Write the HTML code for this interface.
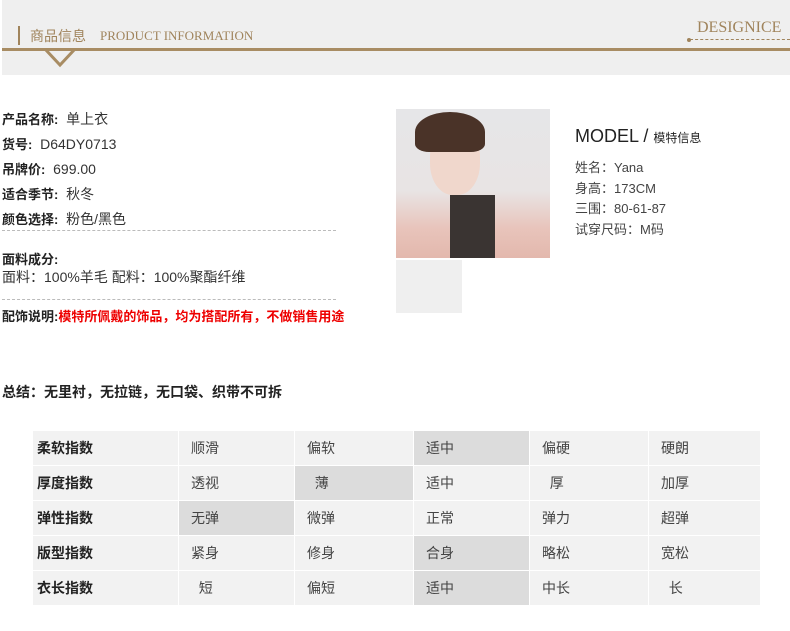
<!DOCTYPE html>
<html><head><meta charset="utf-8"><style>
*{margin:0;padding:0;box-sizing:border-box}
body{width:790px;height:631px;background:#fff;position:relative;overflow:hidden;font-family:"Liberation Sans","Noto Sans CJK SC",sans-serif;color:#333}
.a{position:absolute;white-space:nowrap}
.hd{position:absolute;left:2px;top:0;width:788px;height:75px;background:#efefef}
.gold{color:#a0845c;font-family:"Liberation Serif","Noto Serif CJK SC",serif}
.lbl{font-weight:bold;color:#222;font-size:13px}
.f{font-size:14px}
.dash{position:absolute;left:2px;width:334px;border-top:1px dashed #bbb}
table{position:absolute;left:32px;top:430px;border-collapse:collapse;width:729px}
td{height:35px;background:#f2f2f2;border:1px solid #fff;font-size:14px;color:#444;padding-left:12px}
td.h{font-weight:bold;color:#222;padding-left:4px}
td.s{background:#dcdcdc}
</style></head><body>
<div class="hd"></div>
<div class="a" style="left:18px;top:26px;width:2px;height:19px;background:#a0845c"></div>
<div class="a gold" style="left:30px;top:26px;font-size:14px;font-family:'Noto Sans CJK SC',sans-serif">商品信息</div>
<div class="a gold" style="left:100px;top:28px;font-size:13px">PRODUCT INFORMATION</div>
<div class="a gold" style="left:697px;top:19px;font-size:16px">DESIGNICE</div>
<div class="a" style="left:690px;top:39px;width:100px;border-top:1px dashed #a0845c"></div>
<div class="a" style="left:687px;top:38px;width:4px;height:4px;border-radius:2px;background:#a0845c"></div>
<div class="a" style="left:2px;top:48px;width:788px;height:3px;background:#a88c63"></div>
<svg class="a" style="left:44px;top:47px" width="34" height="22"><path d="M1 2 L16 18 L31 2" fill="none" stroke="#a88c63" stroke-width="3"/></svg>

<div class="a f" style="left:2px;top:109px"><span class="lbl">产品名称:</span> &nbsp;单上衣</div>
<div class="a f" style="left:2px;top:134px"><span class="lbl">货号:</span> &nbsp;D64DY0713</div>
<div class="a f" style="left:2px;top:159px"><span class="lbl">吊牌价:</span> &nbsp;699.00</div>
<div class="a f" style="left:2px;top:184px"><span class="lbl">适合季节:</span> &nbsp;秋冬</div>
<div class="a f" style="left:2px;top:209px"><span class="lbl">颜色选择:</span> &nbsp;粉色/黑色</div>
<div class="dash" style="top:230px"></div>
<div class="a lbl" style="left:2px;top:249px">面料成分:</div>
<div class="a f" style="left:2px;top:267px">面料：100%羊毛 配料：100%聚酯纤维</div>
<div class="dash" style="top:299px"></div>
<div class="a" style="left:2px;top:306px;font-size:13px"><span class="lbl">配饰说明:</span><span style="color:#e00;font-weight:bold">模特所佩戴的饰品，均为搭配所有，不做销售用途</span></div>

<div class="a" style="left:396px;top:109px;width:154px;height:149px;background:linear-gradient(180deg,#e6e6e8 0%,#e8e4e4 55%,#e8c4bb 80%,#e3b8ad 100%)"></div>
<div class="a" style="left:430px;top:125px;width:50px;height:70px;border-radius:45%;background:#f0d7cc"></div>
<div class="a" style="left:415px;top:112px;width:70px;height:40px;border-radius:50% 50% 20% 20%;background:#4a3328"></div>
<div class="a" style="left:450px;top:195px;width:45px;height:63px;background:#3a3432"></div>
<div class="a" style="left:396px;top:260px;width:66px;height:53px;background:#efefef"></div>

<div class="a" style="left:575px;top:126px;font-size:18px;color:#222">MODEL / <span style="font-size:12px">模特信息</span></div>
<div class="a" style="left:575px;top:158px;font-size:13px;color:#444;line-height:20.5px">姓名：Yana<br>身高：173CM<br>三围：80-61-87<br>试穿尺码：M码</div>

<div class="a" style="left:2px;top:382px;font-size:14px;font-weight:bold;color:#222">总结：无里衬，无拉链，无口袋、织带不可拆</div>

<table>
<tr><td class="h" style="width:146px">柔软指数</td><td style="width:116px">顺滑</td><td style="width:119px">偏软</td><td class="s" style="width:116px">适中</td><td style="width:119px">偏硬</td><td>硬朗</td></tr>
<tr><td class="h">厚度指数</td><td>透视</td><td class="s">&nbsp;&nbsp;薄</td><td>适中</td><td>&nbsp;&nbsp;厚</td><td>加厚</td></tr>
<tr><td class="h">弹性指数</td><td class="s">无弹</td><td>微弹</td><td>正常</td><td>弹力</td><td>超弹</td></tr>
<tr><td class="h">版型指数</td><td>紧身</td><td>修身</td><td class="s">合身</td><td>略松</td><td>宽松</td></tr>
<tr><td class="h">衣长指数</td><td>&nbsp;&nbsp;短</td><td>偏短</td><td class="s">适中</td><td>中长</td><td>&nbsp;&nbsp;长</td></tr>
</table>
</body></html>
